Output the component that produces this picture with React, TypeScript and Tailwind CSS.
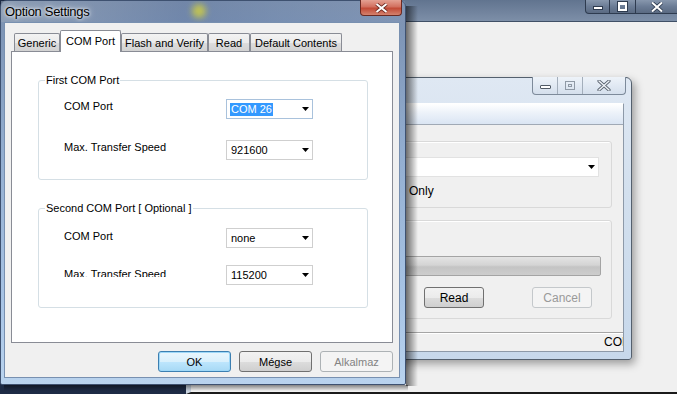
import React from "react";

function Arrow() {
  return (
    <svg width="7" height="4" viewBox="0 0 7 4" className="shrink-0">
      <polygon points="0,0 7,0 3.5,4" fill="#000" />
    </svg>
  );
}

function Combo({ value, selected }: { value: string; selected?: boolean }) {
  return (
    <div
      className={`w-[87px] h-[20px] bg-white border ${
        selected ? "border-[#a9c2dc]" : "border-[#cfcfcf]"
      } flex items-center pl-[3px] pr-[3px]`}
    >
      <span
        className={
          selected
            ? "bg-[#3399ff] text-white px-px leading-[13px]"
            : "px-px leading-[13px]"
        }
      >
        {value}
      </span>
      <div className="ml-auto">
        <Arrow />
      </div>
    </div>
  );
}

function Group({
  title,
  children,
  className,
}: {
  title: string;
  children: React.ReactNode;
  className?: string;
}) {
  return (
    <div
      className={`relative w-[330px] h-[100px] border border-[#d5dfe5] rounded-[3px] ${className ?? ""}`}
    >
      <span className="absolute left-[6px] -top-[8px] bg-white px-px leading-[14px] whitespace-nowrap">
        {title}
      </span>
      {children}
    </div>
  );
}

function WinButton({
  label,
  kind,
}: {
  label: string;
  kind: "ok" | "normal" | "disabled";
}) {
  const cls =
    kind === "ok"
      ? "border-[#3c7fb1] bg-[linear-gradient(180deg,#eaf6fd_0%,#d9f0fc_50%,#bee6fd_51%,#a7d9f5_100%)] text-black shadow-[inset_0_0_0_1px_#9ed8f8]"
      : kind === "normal"
      ? "border-[#707070] bg-[linear-gradient(180deg,#f2f2f2_0%,#ebebeb_50%,#dddddd_51%,#cfcfcf_100%)] text-black"
      : "border-[#adb2b5] bg-[#f4f4f4] text-[#838383]";
  return (
    <div
      className={`w-[73px] h-[21px] rounded-[3px] border flex items-center justify-center leading-[14px] ${cls}`}
    >
      {label}
    </div>
  );
}

function SmallButton({ label, disabled }: { label: string; disabled?: boolean }) {
  return (
    <div
      className={`w-[60px] h-[21px] rounded-[3px] border flex items-center justify-center leading-[14px] ${
        disabled
          ? "border-[#c4c8cb] bg-[#f4f4f4] text-[#9a9a9a]"
          : "border-[#707070] bg-[linear-gradient(180deg,#f2f2f2_0%,#ebebeb_50%,#dddddd_51%,#cfcfcf_100%)] text-black"
      }`}
    >
      {label}
    </div>
  );
}

const tabBase =
  "h-[18px] border-t border-l border-r border-[#898c95] bg-[linear-gradient(180deg,#f3f3f3_0%,#ebebeb_50%,#dddddd_51%,#d2d2d2_100%)] flex items-center justify-center leading-[14px] whitespace-nowrap rounded-t-[2px]";

export default function App() {
  return (
    <div className="relative w-[677px] h-[394px] overflow-hidden bg-[#1d2b45] text-[11px] text-black font-['Liberation_Sans',Arial,sans-serif]">
      {/* Background big window */}
      <div className="absolute left-[186px] top-0 right-[-10px] bottom-0 bg-[#f0f0f0] border-l-[5px] border-l-[#c8d2de] border-b-[2px] border-b-[#1a1a1a]">
        <div className="h-[22px] border-b border-[#3f4f66] bg-[linear-gradient(180deg,#61748f_0%,#72849e_60%,#7d8fa8_100%)]" />
      </div>
      {/* big window caption buttons */}
      <div className="absolute left-[585px] top-0 w-[100px] h-[14px] flex border border-t-0 border-[#2e3b4f] rounded-bl-[4px] overflow-hidden bg-[linear-gradient(180deg,#8797ad_0%,#6b7c95_50%,#5a6a82_100%)]">
        <div className="w-[24px] h-full border-r border-[#2e3b4f] flex items-end justify-center pb-[3px]">
          <div className="w-[10px] h-[4px] bg-white border border-[#2e3b4f]" />
        </div>
        <div className="w-[26px] h-full border-r border-[#2e3b4f] flex items-center justify-center">
          <div className="w-[9px] h-[9px] border-[2px] border-t-[3px] border-white outline outline-1 outline-[#2e3b4f]" />
        </div>
        <div className="w-[42px] h-full flex items-center justify-center">
          <svg width="12" height="10" viewBox="0 0 12 10">
            <path d="M1 0.5 L11 9.5 M11 0.5 L1 9.5" stroke="#2e3b4f" strokeWidth="3.6" />
            <path d="M1 0.5 L11 9.5 M11 0.5 L1 9.5" stroke="#fff" strokeWidth="2" />
          </svg>
        </div>
      </div>

      {/* Middle window */}
      <div className="absolute left-[330px] top-[77px] w-[302px] h-[283px] rounded-t-[6px] rounded-b-[3px] border border-[#54606e] bg-[linear-gradient(180deg,#dfe8f3_0%,#d3e0ee_40%,#c7d8eb_100%)] shadow-[3px_4px_8px_rgba(0,0,0,0.35)] flex flex-col">
        <div className="h-[25px]" />
        <div className="mx-[7px] flex-1 flex flex-col bg-[#f0f0f0] border border-[#8d99a8] border-t-white">
          <div className="h-[21px] border-b border-[#a0a9b5] bg-[linear-gradient(180deg,#ffffff_0%,#eef3fa_40%,#dae5f3_100%)]" />
          <div className="flex-1 flex flex-col px-[11px]">
            <div className="mt-[16px] h-[67px] border border-[#d9d9d9] rounded-[3px] shadow-[inset_1px_1px_0_#fff] pt-[15px] pr-[12px] pl-[10px] flex flex-col">
              <div className="h-[20px] bg-white border border-[#e2e2e2] flex items-center justify-end pr-[3px]">
                <Arrow />
              </div>
              <div className="mt-[7px] leading-[14px] pl-[48px] text-[12px]">Only</div>
            </div>
            <div className="mt-[12px] h-[99px] border border-[#d9d9d9] rounded-[3px] shadow-[inset_1px_1px_0_#fff] pt-[35px] pr-[10px] pl-[10px] flex flex-col">
              <div className="h-[20px] border border-[#a4a4a4] rounded-[2px] bg-[linear-gradient(180deg,#e4e4e4_0%,#d4d4d4_45%,#c4c4c4_55%,#cdcdcd_100%)]" />
              <div className="mt-[11px] flex justify-between pl-[63px] pr-[9px] text-[12px]">
                <SmallButton label="Read" />
                <SmallButton label="Cancel" disabled />
              </div>
            </div>
          </div>
          <div className="h-[19px] border-t border-[#a5a5a5] shadow-[inset_0_1px_0_#fff] flex justify-end items-center">
            <div className="w-[19px] overflow-hidden whitespace-nowrap text-[12px] leading-[16px]">
              COM 26
            </div>
          </div>
        </div>
        <div className="h-[7px]" />
        {/* caption buttons */}
        <div className="absolute right-[5px] -top-px h-[18px] flex border border-t-0 border-[#7d8a9a] rounded-b-[4px] overflow-hidden bg-[linear-gradient(180deg,#eef3f9_0%,#e1e9f3_50%,#d4dfec_100%)]">
          <div className="w-[25px] h-full border-r border-[#a3aebb] flex items-center justify-center pt-[3px]">
            <div className="w-[11px] h-[4px] rounded-[1px] border border-[#505a66] bg-white" />
          </div>
          <div className="w-[25px] h-full border-r border-[#a3aebb] flex items-center justify-center">
            <div className="w-[10px] h-[9px] border border-[#8f99a5] flex items-center justify-center">
              <div className="w-[4px] h-[3px] border border-[#8f99a5]" />
            </div>
          </div>
          <div className="w-[42px] h-full flex items-center justify-center">
            <svg width="14" height="11" viewBox="0 0 14 11">
              <path d="M2 1 L12 10 M12 1 L2 10" stroke="#5a6470" strokeWidth="3.2" strokeLinecap="round" />
              <path d="M2 1 L12 10 M12 1 L2 10" stroke="#eef2f7" strokeWidth="1.4" strokeLinecap="round" />
            </svg>
          </div>
        </div>
      </div>

      {/* Dialog shadow */}
      <div className="absolute left-[406px] top-[6px] w-[12px] h-[380px] bg-[linear-gradient(90deg,rgba(0,0,0,0.55),rgba(0,0,0,0))]" />
      <div className="absolute left-[4px] top-[385px] w-[404px] h-[6px] bg-[linear-gradient(180deg,rgba(0,0,0,0.45),rgba(0,0,0,0))]" />

      {/* Dialog */}
      <div className="absolute left-0 top-0 w-[406px] h-[385px] rounded-t-[7px] rounded-b-[2px] border border-[#3e5170] bg-[linear-gradient(180deg,#8193ad_0%,#7e95b6_8%,#93aed0_40%,#a9c5e6_80%,#b9d3ee_100%)] flex flex-col">
        {/* title bar */}
        <div className="relative h-[21px] flex items-center pl-[4px] overflow-hidden">
          <div className="absolute left-0 top-0 w-full h-full bg-[linear-gradient(90deg,rgba(150,165,185,0.6)_0%,rgba(90,115,160,0.4)_45%,rgba(110,135,175,0.4)_70%,rgba(130,150,185,0.3)_100%)]" />
          <div className="absolute left-[191px] top-[3px] w-[14px] h-[14px] rounded-full bg-[#c9c94a] blur-[3px] opacity-90" />
          <span className="relative text-[13px] leading-[16px] tracking-[-0.3px] text-black [text-shadow:0_0_6px_#fff,0_0_3px_#fff]">
            Option Settings
          </span>
        </div>
        {/* close button */}
        <div className="absolute right-[3px] -top-px w-[42px] h-[16px] rounded-b-[4px] border border-t-0 border-[#6b2a22] bg-[linear-gradient(180deg,#e4a193_0%,#d2705f_45%,#c24a36_55%,#d4826e_100%)] flex items-center justify-center">
          <svg width="13" height="10" viewBox="0 0 13 10">
            <path d="M1.5 1 L11.5 9 M11.5 1 L1.5 9" stroke="#6b2a22" strokeWidth="3.6" />
            <path d="M1.5 1 L11.5 9 M11.5 1 L1.5 9" stroke="#fff" strokeWidth="2" />
          </svg>
        </div>

        {/* client */}
        <div className="ml-[3px] mr-[5px] h-[356px] bg-[#f0f0f0] border border-[#7890b0] px-[6px] flex flex-col">
          {/* tabs */}
          <div className="mt-[8px] h-[20px] flex items-end pl-[3px]">
            <div className={`${tabBase} w-[46px]`}>Generic</div>
            <div className="relative z-10 -mb-px h-[22px] w-[61px] border-t border-l border-r border-[#898c95] bg-white flex items-start justify-center pt-[3px] leading-[14px] whitespace-nowrap rounded-t-[2px]">
              COM Port
            </div>
            <div className={`${tabBase} w-[87px]`}>Flash and Verify</div>
            <div className={`${tabBase} w-[42px]`}>Read</div>
            <div className={`${tabBase} w-[92px]`}>Default Contents</div>
          </div>
          {/* panel */}
          <div className="h-[292px] border border-[#898c95] bg-white pl-[26px] flex flex-col">
            <Group title="First COM Port" className="mt-[28px] pt-[18px]">
              <div className="flex flex-col gap-[21px] pl-[25px]">
                <div className="flex items-start">
                  <div className="w-[162px] leading-[14px]">COM Port</div>
                  <Combo value="COM 26" selected />
                </div>
                <div className="flex items-start">
                  <div className="w-[162px] leading-[14px]">Max. Transfer Speed</div>
                  <Combo value="921600" />
                </div>
              </div>
            </Group>
            <Group title="Second COM Port [ Optional ]" className="mt-[28px] pt-[19px]">
              <div className="flex flex-col gap-[17px] pl-[25px]">
                <div className="flex items-start">
                  <div className="w-[162px] mt-[1px] leading-[14px]">COM Port</div>
                  <Combo value="none" />
                </div>
                <div className="flex items-start">
                  <div className="w-[162px] mt-[2px] h-[10px] overflow-hidden leading-[14px]">
                    Max. Transfer Speed
                  </div>
                  <Combo value="115200" />
                </div>
              </div>
            </Group>
          </div>
          {/* buttons */}
          <div className="mt-[8px] flex justify-end gap-[8px] pr-[0px]">
            <WinButton label="OK" kind="ok" />
            <WinButton label="Mégse" kind="normal" />
            <WinButton label="Alkalmaz" kind="disabled" />
          </div>
        </div>
      </div>
    </div>
  );
}
